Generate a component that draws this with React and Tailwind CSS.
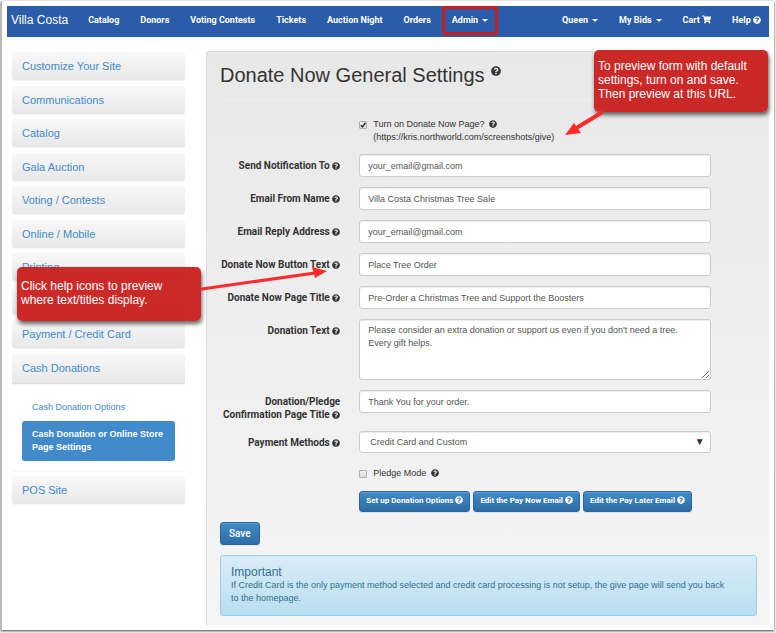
import { FaQuestionCircle, FaShoppingCart } from 'react-icons/fa'

const navLinks = ['Catalog', 'Donors', 'Voting Contests', 'Tickets', 'Auction Night', 'Orders']

// null is an untitled section
const sideLinks = [
  'Customize Your Site',
  'Communications',
  'Catalog',
  'Gala Auction',
  'Voting / Contests',
  'Online / Mobile',
  'Printing',
  null,
  'Payment / Credit Card',
]

const fields = [
  { id: 'notify', label: 'Send Notification To', value: 'your_email@gmail.com' },
  { id: 'from', label: 'Email From Name', value: 'Villa Costa Christmas Tree Sale' },
  { id: 'reply', label: 'Email Reply Address', value: 'your_email@gmail.com' },
  { id: 'button', label: 'Donate Now Button Text', value: 'Place Tree Order' },
  { id: 'title', label: 'Donate Now Page Title', value: 'Pre-Order a Christmas Tree and Support the Boosters' },
]

const inputClass =
  'block w-full rounded-[3px] border border-[#ccc] bg-white text-[#555] shadow-[inset_0_1px_1px_rgba(0,0,0,0.075)] outline-none'

const buttonClass =
  "rounded-[3px] border border-[#2b669a] bg-linear-to-b from-[#428bca] to-[#2d6ca2] font-['Roboto',sans-serif] text-white shadow-[inset_0_1px_0_rgba(255,255,255,0.15),0_1px_1px_rgba(0,0,0,0.075)]"

const sideLinkClass =
  'block rounded-[3px] bg-linear-to-b from-[#f8f8f8] to-[#e8e8e8] px-[10px] leading-7 text-[#428bca] shadow-[0_1px_1px_rgba(0,0,0,0.05)]'

function Help({ className = '' }) {
  return <FaQuestionCircle aria-hidden="true" className={`inline-block size-2 align-[-1px] ${className}`} />
}

function Caret() {
  return <span className="ml-1 inline-block border-x-[3px] border-t-[3px] border-x-transparent border-t-current align-middle" />
}

function Row({ id, label, children }) {
  return (
    <div className="grid grid-cols-12">
      <label htmlFor={id} className="col-span-3 pt-[5px] pr-[9px] text-right font-['Roboto',sans-serif] text-[10px] font-bold text-[#333]">
        {label} <Help />
      </label>
      <div className="col-span-8 px-[10px]">{children}</div>
    </div>
  )
}

function Check({ id, label, note, defaultChecked }) {
  return (
    <div className="grid grid-cols-12">
      <div className="col-span-8 col-start-4 flex gap-[6px] px-[10px]">
        <span className="relative mt-[3px] size-2 shrink-0">
          <input
            id={id}
            type="checkbox"
            defaultChecked={defaultChecked}
            className="peer block size-2 appearance-none rounded-[1px] border border-[#b0b0b0] bg-linear-to-b from-[#f2f2f2] to-[#dcdcdc]"
          />
          <svg viewBox="0 0 8 8" className="pointer-events-none absolute inset-0 hidden size-2 peer-checked:block" fill="none" stroke="#333" strokeWidth="1.5">
            <path d="M1.8 4.2 3.4 5.8 6.5 1.8" />
          </svg>
        </span>
        <label htmlFor={id}>
          {label} <Help className="ml-[2px]" />
          {note && <span className="block">{note}</span>}
        </label>
      </div>
    </div>
  )
}

function Callout({ className, children }) {
  return (
    <div className={`absolute rounded-[5px] bg-[#c91f1c]/95 text-xs leading-[14px] text-white shadow-[1px_3px_4px_rgba(0,0,0,0.6)] ${className}`}>
      {children}
    </div>
  )
}

export default function App() {
  return (
    <div className="bg-[#f2f2f2] pr-[2px] pb-[3px] pl-[1px] pt-[1px] font-['Liberation_Sans',Arial,sans-serif] text-[9px] leading-[13px] text-[#333]">
      <div className="relative border-l border-[#b5b5b5] bg-white px-[5px] pt-[5px] pb-[5px] shadow-[0_1px_2px_rgba(0,0,0,0.7)]">
        <nav className="flex h-[31px] items-center bg-[#2b5caa] pb-[3px] text-white">
          <a href="#" className="mr-[10px] pl-1 text-xs">Villa Costa</a>
          <div className="flex flex-1 gap-px font-['Roboto',sans-serif] font-bold whitespace-nowrap">
            {navLinks.map((name) => (
              <a key={name} href="#" className="px-[10px]">{name}</a>
            ))}
            <a href="#" className="relative px-[10px]">
              Admin<Caret />
              <span className="absolute -inset-y-2 inset-x-0 rounded-[2px] border-3 border-[#c91f1c]" />
            </a>
            <a href="#" className="ml-auto px-[10px]">Queen<Caret /></a>
            <a href="#" className="px-[10px]">My Bids<Caret /></a>
            <a href="#" className="px-[10px]">Cart <FaShoppingCart className="inline-block size-[9px] align-[-1px]" /></a>
            <a href="#" className="pr-2 pl-[10px]">Help <Help /></a>
          </div>
        </nav>

        <div className="flex items-start pt-[14px]">
          <aside className="ml-[5px] w-[173px] shrink-0 pt-[1px] text-[11px]">
            <div className="flex h-[332px] flex-col justify-between">
              {sideLinks.map((name, i) => name
                ? <a key={i} href="#" className={`h-7 ${sideLinkClass}`}>{name}</a>
                : <div key={i} className={`h-7 ${sideLinkClass}`} />
              )}
              <a href="#" className={`h-[30px] rounded-b-none border-b border-[#ddd] ${sideLinkClass}`}>Cash Donations</a>
            </div>
            <div className="mb-[5px] rounded-b-[3px] p-[10px] text-[9px] leading-[13px] shadow-[0_1px_1px_rgba(0,0,0,0.05)]">
              <a href="#" className="block px-[10px] py-[7px] text-[#428bca]">Cash Donation Options</a>
              <a href="#" className="block rounded-[3px] bg-[#428bca] px-[10px] py-[7px] font-bold text-white">
                Cash Donation or Online Store Page Settings
              </a>
            </div>
            <a href="#" className={`h-7 ${sideLinkClass}`}>POS Site</a>
          </aside>

          <main className="ml-[21px] min-w-0 flex-1 rounded-tl-[3px] border-t border-l border-[#dcdcdc] bg-linear-to-b from-[#e8e8e8] to-[#f5f5f5] px-[13px] pb-[9px] pr-3">
            <h1 className="mb-[17px] border-b border-[#eee] pt-[11px] pb-[13px] text-xl leading-6">
              Donate Now General Settings <Help className="relative -top-[7px] ml-px size-[10px]" />
            </h1>

            <form>
              <div className="-mx-[10px] space-y-[10px]">
                <Check id="enabled" label="Turn on Donate Now Page?" note="(https://kris.northworld.com/screenshots/give)" defaultChecked />
                {fields.map((f) => (
                  <Row key={f.id} id={f.id} label={f.label}>
                    <input id={f.id} defaultValue={f.value} className={`h-[23px] px-2 ${inputClass}`} />
                  </Row>
                ))}
                <Row id="text" label="Donation Text">
                  <textarea
                    id="text"
                    defaultValue="Please consider an extra donation or support us even if you don't need a tree. Every gift helps."
                    className={`h-[61px] px-2 py-1 ${inputClass}`}
                  />
                </Row>
                <Row id="confirm" label="Donation/Pledge Confirmation Page Title">
                  <input id="confirm" defaultValue="Thank You for your order." className={`h-[23px] px-2 ${inputClass}`} />
                </Row>
                <Row id="methods" label="Payment Methods">
                  <div className="relative">
                    <select id="methods" className={`h-[22px] appearance-none px-[10px] ${inputClass}`}>
                      <option>Credit Card and Custom</option>
                    </select>
                    <span className="pointer-events-none absolute top-1 right-[6px] text-[10px]">▼</span>
                  </div>
                </Row>
                <div className="pt-1 pb-px">
                  <Check id="pledge" label="Pledge Mode" />
                </div>
                <div className="grid grid-cols-12">
                  <div className="col-span-9 col-start-4 flex gap-[3px] px-[10px]">
                    {['Set up Donation Options', 'Edit the Pay Now Email', 'Edit the Pay Later Email'].map((name) => (
                      <button key={name} type="button" className={`h-[21px] px-[6px] pb-[2px] text-[8px] font-bold whitespace-nowrap ${buttonClass}`}>
                        {name} <Help />
                      </button>
                    ))}
                  </div>
                </div>
              </div>
              <button type="submit" className={`mt-[10px] h-[23px] px-2 text-[10px] font-medium ${buttonClass}`}>Save</button>
            </form>

            <div className="mt-[10px] rounded-[3px] border border-[#9acfea] bg-linear-to-b from-[#d9edf7] to-[#b9def0] pt-[10px] pr-6 pb-[10px] pl-[10px] text-[#31708f]">
              <h4 className="text-xs leading-[13px]">Important</h4>
              <p>
                If Credit Card is the only payment method selected and credit card processing is not setup, the give page will send you back to the homepage.
              </p>
            </div>
          </main>
        </div>

        <Callout className="top-[49px] right-[6px] h-[62px] w-[174px] px-1 pt-[9px]">
          To preview form with default settings, turn on and save. Then preview at this URL.
        </Callout>
        <svg className="absolute top-[109px] right-[170px] h-7 w-10" viewBox="0 0 40 28" fill="#ff2a2a" stroke="#ff2a2a">
          <path d="M37 3 14 17" strokeWidth="4" strokeLinecap="round" fill="none" />
          <path d="M1 25 10 13 17 23Z" stroke="none" />
        </svg>
        <Callout className="top-[266px] left-[15px] h-[54px] w-[184px] px-1 pt-3">
          Click help icons to preview where text/titles display.
        </Callout>
        <svg className="absolute top-[261px] left-[196px] h-8 w-[132px]" viewBox="0 0 132 32" fill="#ff2a2a" stroke="#ff2a2a">
          <path d="M4 27 117 11" strokeWidth="3" strokeLinecap="round" fill="none" />
          <path d="M129 9 114 5 117 16Z" stroke="none" />
        </svg>
      </div>
    </div>
  )
}
